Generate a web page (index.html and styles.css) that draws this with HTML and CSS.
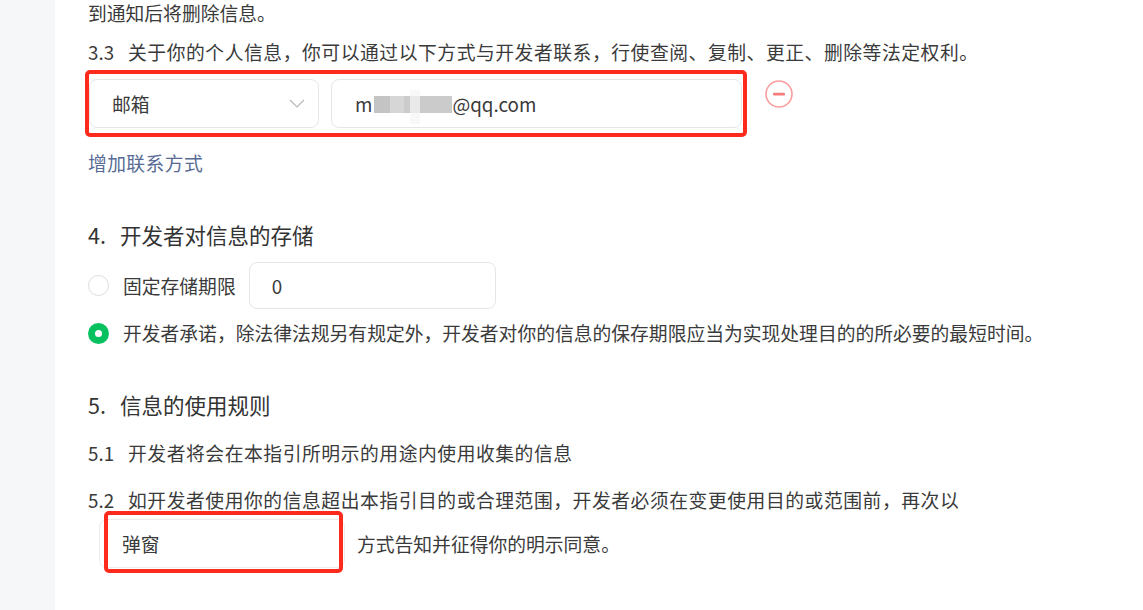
FILE: index.html
```html
<!DOCTYPE html>
<html lang="zh-CN">
<head>
  <meta charset="UTF-8">
  <title>用户隐私保护指引</title>
  <link rel="stylesheet" href="styles.css">
</head>
<body>

<div class="page">
  <aside class="side"></aside>

  <main class="content">
    <p class="line">到通知后将删除信息。</p>

    <p class="line wide gap-13"><span class="num">3.3</span>关于你的个人信息，你可以通过以下方式与开发者联系，行使查阅、复制、更正、删除等法定权利。</p>

    <div class="contact-row">
      <div class="contact-fields">
        <div class="field select">
          <span>邮箱</span>
          <svg class="chevron" width="16" height="9" viewBox="0 0 16 9"><path d="M1 1l7 7 7-7" fill="none" stroke="#b8b8b8" stroke-width="1.2"/></svg>
        </div>
        <div class="field email">m<span class="masked"><i class="m1"></i><i class="m2"></i><i class="m3"></i></span>@qq.com</div>
        <div class="mark"></div>
      </div>
      <svg class="remove" width="30" height="30" viewBox="0 0 30 30">
        <circle cx="15" cy="15" r="13" fill="none" stroke="#fb9c9c" stroke-width="1.6"/>
        <rect x="9" y="13.8" width="12" height="2.6" rx="1.2" fill="#f77b7b"/>
      </svg>
    </div>

    <a class="link" href="#">增加联系方式</a>

    <h2 class="title"><span class="hnum">4.</span>开发者对信息的存储</h2>

    <div class="radio-row first-radio">
      <span class="radio"></span>
      <span class="label">固定存储期限</span>
      <div class="field days">0</div>
    </div>

    <div class="radio-row second-radio">
      <span class="radio checked"></span>
      <span class="label">开发者承诺，除法律法规另有规定外，开发者对你的信息的保存期限应当为实现处理目的的所必要的最短时间。</span>
    </div>

    <h2 class="title"><span class="hnum">5.</span>信息的使用规则</h2>

    <p class="line wide gap-20"><span class="num">5.1</span>开发者将会在本指引所明示的用途内使用收集的信息</p>

    <p class="line wide gap-21"><span class="num">5.2</span>如开发者使用你的信息超出本指引目的或合理范围，开发者必须在变更使用目的或范围前，再次以</p>

    <div class="notice-row">
      <div class="notice-wrap">
        <div class="field notice">弹窗</div>
        <div class="mark"></div>
      </div>
      <span>方式告知并征得你的明示同意。</span>
    </div>
  </main>
</div>

</body>
</html>
```

FILE: styles.css
```css
body {
  margin: 0;
  font-family: "Noto Sans CJK SC", "Noto Sans", sans-serif;
  color: #3a3a3a;
  background-color: #fff;
  overflow: hidden;
}
.page {
  display: flex;
  min-height: 100vh;
}
.side {
  width: 55px;
  flex-shrink: 0;
  background-color: #f6f7f9;
}
.content {
  flex: 1;
  padding-left: 33px;
  font-size: 18.8px;
}
.line {
  margin: 0;
  line-height: 26px;
  white-space: nowrap;
}
.wide { letter-spacing: 0.55px; }
.gap-13 { margin-top: 13px; }
.gap-20 { margin-top: 20px; }
.gap-21 { margin-top: 21px; }
.num {
  display: inline-block;
  width: 40px;
  letter-spacing: 0;
}

.field {
  box-sizing: border-box;
  border: 1px solid #e6e6e6;
  border-radius: 8px;
  background-color: #fff;
  display: flex;
  align-items: center;
  padding-left: 22px;
}

.contact-row {
  display: flex;
  margin-top: 14px;
  margin-left: 1px;
}
.contact-fields {
  position: relative;
  display: flex;
  gap: 12px;
}
.select {
  width: 230px;
  height: 49px;
  justify-content: space-between;
  padding-right: 13px;
}
.email {
  width: 411px;
  height: 49px;
  padding-left: 23px;
}
.masked {
  position: relative;
  display: inline-block;
  width: 80px;
  height: 17px;
  margin-top: 2px;
}
.masked i {
  position: absolute;
  top: 0;
  height: 17px;
}
.masked .m1 { left: 2px; width: 16px; background-color: #c4c4c4; }
.masked .m2 { left: 18px; width: 14px; background-color: #d6d6d6; }
.masked .m3 { left: 32px; width: 48px; background-color: #cbcbcb; }
.masked::after {
  content: "";
  position: absolute;
  left: 38px;
  top: -6px;
  width: 10px;
  height: 34px;
  background-color: rgba(245, 245, 245, 0.7);
}

.mark {
  position: absolute;
  top: -9px;
  right: -5px;
  bottom: -9px;
  left: -4px;
  border: 4px solid #fe2a1c;
  border-radius: 5px;
  pointer-events: none;
}

.remove {
  margin-left: 22px;
}

.link {
  display: block;
  margin-top: 22px;
  line-height: 26px;
  color: #576b95;
  text-decoration: none;
  letter-spacing: 0.4px;
}

.title {
  margin: 44px 0 0;
  font-size: 21.5px;
  font-weight: normal;
  line-height: 30px;
  color: #333;
}
.hnum {
  display: inline-block;
  width: 32px;
}

.radio-row {
  display: flex;
  align-items: center;
  white-space: nowrap;
}
.first-radio { margin-top: 12px; }
.second-radio {
  margin-top: 11px;
  line-height: 26px;
}
.radio {
  box-sizing: border-box;
  width: 21px;
  height: 21px;
  border: 1px solid #dcdcdc;
  border-radius: 50%;
  margin-right: 14px;
  flex-shrink: 0;
}
.radio.checked {
  border: none;
  background-color: #07c160;
  display: flex;
  align-items: center;
  justify-content: center;
}
.radio.checked::after {
  content: "";
  width: 7px;
  height: 7px;
  border-radius: 50%;
  background-color: #fff;
}
.days {
  width: 247px;
  height: 47px;
  margin-left: 13px;
}

.notice-row {
  display: flex;
  align-items: center;
  margin-top: 6px;
  padding-left: 11px;
}
.notice-wrap {
  position: relative;
  margin-right: 12px;
}
.notice-wrap .mark {
  top: -8px;
  right: 2px;
  bottom: -5px;
  left: 5px;
}
.notice {
  width: 246px;
  height: 49px;
  border-color: #ececec;
}
```
